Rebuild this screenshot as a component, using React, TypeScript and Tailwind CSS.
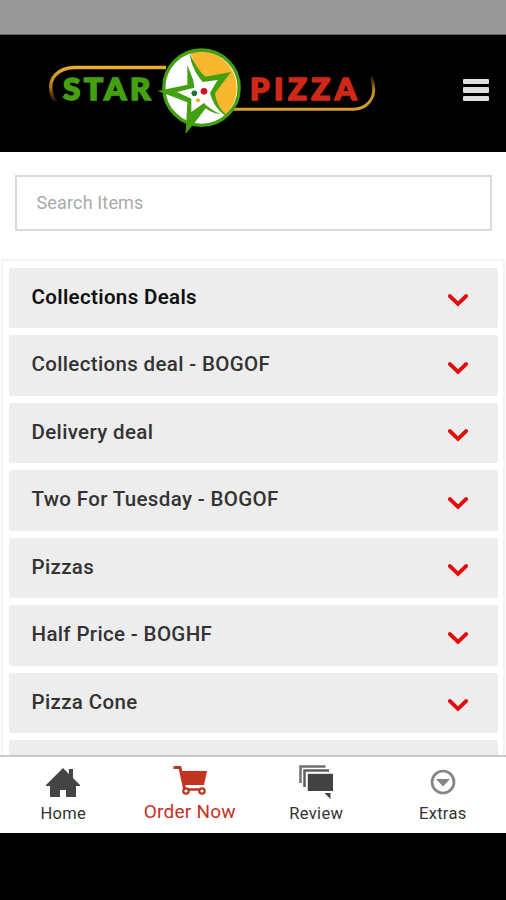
import React from 'react';

interface Category {
  name: string;
  active?: boolean;
}

const categories: Category[] = [
  { name: 'Collections Deals', active: true },
  { name: 'Collections deal - BOGOF' },
  { name: 'Delivery deal' },
  { name: 'Two For Tuesday - BOGOF' },
  { name: 'Pizzas' },
  { name: 'Half Price - BOGHF' },
  { name: 'Pizza Cone' },
  { name: '' },
];

const Logo: React.FC = () => (
  <svg width="336" height="96" viewBox="44 42 336 96" role="img" aria-label="Star Pizza">
    <defs>
      <linearGradient id="swooshLeft" gradientUnits="userSpaceOnUse" x1="0" y1="66" x2="0" y2="103">
        <stop offset="0" stopColor="#f0b030" />
        <stop offset="0.55" stopColor="#b07c22" />
        <stop offset="1" stopColor="#000000" />
      </linearGradient>
      <linearGradient id="swooshRight" gradientUnits="userSpaceOnUse" x1="0" y1="75" x2="0" y2="111">
        <stop offset="0" stopColor="#000000" />
        <stop offset="0.4" stopColor="#b98527" />
        <stop offset="1" stopColor="#d8a02e" />
      </linearGradient>
    </defs>

    <path
      d="M166 67.500H74C57 68 49 79 51 91C51.500 95 53 99 56 102"
      fill="none"
      stroke="url(#swooshLeft)"
      strokeWidth="3.4"
    />
    <path
      d="M233 109.300H353C367 109 375 98 373.500 87C373.200 83 372.500 79 371 76"
      fill="none"
      stroke="url(#swooshRight)"
      strokeWidth="3"
    />

    {/* badge with the star on top */}
    <g transform="translate(155 42) scale(0.33333)">
      <circle cx="139.500" cy="137" r="113" fill="#ffffff" />
      <path d="M106 30A112 112 0 0 1 208 222L150 160L130 100Z" fill="#f9b72f" />
      <circle cx="139.500" cy="137" r="113" fill="none" stroke="#43a010" strokeWidth="10" />
      <path
        d="M104 32C114 58 132 86 151 104L228 90L180 154C184 180 194 202 214 218C184 218 166 210 152 199L118 244L92 275L97 181L8 147L97 128L97 69L114 112Z"
        fill="#43a010"
      />
      <path
        d="M103 34C108 66 122 96 143 120L188 114L165 152C172 180 186 202 210 221C182 212 162 199 147 183L109 210L109 170L66 150L118 137C117 112 106 92 101 66Z"
        fill="#ffffff"
      />
      <circle cx="118" cy="154" r="8.500" fill="#19743b" />
      <circle cx="147" cy="148" r="10" fill="#cf101c" />
      <circle cx="129" cy="175" r="6.500" fill="#efad38" />
    </g>

    <text
      x="63"
      y="99.5"
      textLength="91"
      lengthAdjust="spacingAndGlyphs"
      className="fill-[#43a010] stroke-[#43a010] font-['Lato'] text-[31px] font-black tracking-[3.5px]"
      strokeWidth="1.7"
    >
      STAR
    </text>
    <text
      x="250"
      y="99.5"
      textLength="111"
      lengthAdjust="spacingAndGlyphs"
      className="fill-[#cf2818] stroke-[#cf2818] font-['Lato'] text-[31px] font-black tracking-[4.5px]"
      strokeWidth="1.7"
    >
      PIZZA
    </text>
  </svg>
);

const Header: React.FC = () => (
  <header className="flex h-[117px] shrink-0 items-start justify-between bg-black pt-[7px] pr-[17px] pl-11">
    <Logo />
    <button aria-label="Menu" className="mt-[36.500px] flex w-[26px] flex-col gap-[3px]">
      <span className="h-[5.500px] rounded-[1px] bg-[#e0e0e0]" />
      <span className="h-[5.500px] rounded-[1px] bg-[#e0e0e0]" />
      <span className="h-[5.500px] rounded-[1px] bg-[#e0e0e0]" />
    </button>
  </header>
);

const CategoryRow: React.FC<{ category: Category }> = ({ category }) => (
  <li className="flex h-[60.5px] shrink-0 items-center justify-between rounded-[2px] bg-[#ededed] pr-[29px] pl-[22.500px]">
    <span
      className={`pb-[1px] text-[20.500px] tracking-[0.350px] ${
        category.active ? 'font-semibold text-[#111111]' : 'font-medium text-[#333333]'
      }`}
    >
      {category.name}
    </span>
    <svg width="22" height="14" viewBox="0 0 22 14" className="mt-[5px]">
      <path d="M2.800 3L11 10.800L19.200 3" fill="none" stroke="#e30b0b" strokeWidth="3.800" strokeLinecap="round" />
    </svg>
  </li>
);

const HomeIcon = () => (
  <svg width="34" height="30" viewBox="0 0 34 30" fill="#444444">
    <path d="M0 17L17 0L23 6V1H27V10L34 17V18H30V29H20V22H14V29H4V18H0Z" />
  </svg>
);

const CartIcon = () => (
  <svg width="36" height="30" viewBox="0 0 36 30">
    <path d="M9 5H35L32 19H12Z" fill="#c13420" />
    <path d="M1.500 1.500H8L12.500 22.500" fill="none" stroke="#c13420" strokeWidth="3" strokeLinejoin="round" />
    <path d="M13 23.500H30" stroke="#c13420" strokeWidth="2.500" />
    <circle cx="14" cy="25" r="2.700" fill="#ffffff" stroke="#c13420" strokeWidth="2.200" />
    <circle cx="30" cy="25" r="2.700" fill="#ffffff" stroke="#c13420" strokeWidth="2.200" />
  </svg>
);

const ReviewIcon = () => (
  <svg width="34" height="35" viewBox="0 0 34 35">
    <path d="M1.500 18V1.500H26.500" fill="none" stroke="#707070" strokeWidth="2.500" />
    <path d="M5.500 22V5.500H30" fill="none" stroke="#5c5c5c" strokeWidth="2.500" />
    <path d="M8.800 8.800H34V26H8.800Z" fill="#424242" />
    <path d="M25.500 28H31.500V34Z" fill="#424242" />
  </svg>
);

const ExtrasIcon = () => (
  <svg width="26" height="26" viewBox="0 0 26 26">
    <circle cx="13" cy="13" r="11" fill="none" stroke="#858585" strokeWidth="2.700" />
    <path d="M6 10H20L13 17.500Z" fill="#858585" />
  </svg>
);

const BottomNav: React.FC = () => (
  <nav className="grid h-[78px] shrink-0 grid-cols-4 border-t-2 border-[#c9c9c9] bg-white text-[16.5px] tracking-[0.3px] text-[#333333]">
    <a className="flex flex-col items-center pt-[10.500px]">
      <HomeIcon />
      <span className="mt-[5px] leading-[22px]">Home</span>
    </a>
    <a className="flex flex-col items-center pt-[9px] text-[#c5301f]">
      <CartIcon />
      <span className="mt-[4px] text-[19px] leading-[24px] tracking-[0.250px]">Order Now</span>
    </a>
    <a className="flex flex-col items-center pt-[8px]">
      <ReviewIcon />
      <span className="mt-[3px] leading-[22px]">Review</span>
    </a>
    <a className="flex flex-col items-center pt-[12px]">
      <ExtrasIcon />
      <span className="mt-[8px] leading-[22px]">Extras</span>
    </a>
  </nav>
);

export default function App() {
  return (
    <div className="flex h-[900px] w-[506px] flex-col overflow-hidden bg-white font-['Roboto',sans-serif]">
      <div className="h-[35px] shrink-0 border-b border-[#666666] bg-[#999999]" />
      <Header />
      <main className="flex min-h-0 flex-1 flex-col overflow-hidden">
        <input
          type="text"
          placeholder="Search Items"
          className="mx-[14.5px] mt-[23px] h-[56px] shrink-0 border-2 border-[#dadada] pb-[2px] pl-[20px] text-[18px] tracking-[0.15px] outline-none placeholder:text-[#aaaaaa]"
        />
        <ul className="mx-[1px] mt-[28px] flex shrink-0 flex-col gap-[7px] rounded-[3px] border-2 border-[#f3f3f3] pt-[6.500px] pr-[5px] pl-[6px]">
          {categories.map((category, i) => (
            <CategoryRow key={i} category={category} />
          ))}
        </ul>
      </main>
      <BottomNav />
      <div className="h-[67px] shrink-0 bg-black" />
    </div>
  );
}
